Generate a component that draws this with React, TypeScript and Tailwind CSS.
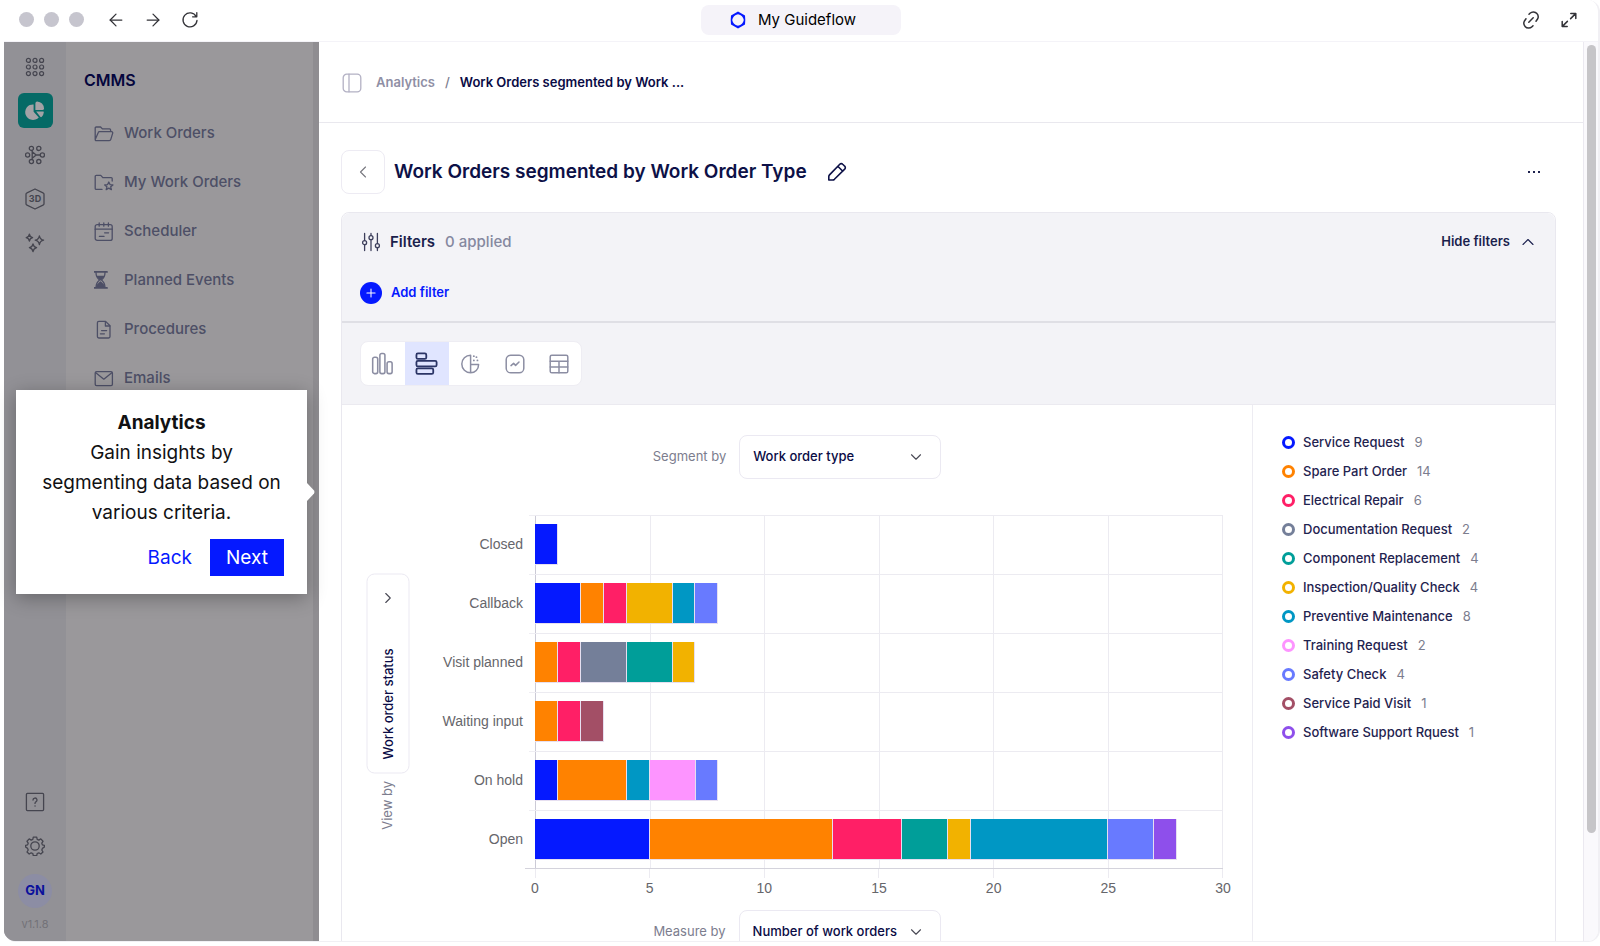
import type { ReactNode } from 'react';
import { ArrowLeft, ArrowRight, ChevronDown, ChevronLeft, ChevronUp, Plus } from 'lucide-react';

const BLUE = '#0519ff';
const ORANGE = '#ff8200';
const PINK = '#ff1f66';
const SLATE = '#747f99';
const GREEN = '#009e99';
const YELLOW = '#f2b200';
const CYAN = '#0097c4';
const LILAC = '#fd94ff';
const INDIGO = '#687aff';
const MAROON = '#a34f66';
const PURPLE = '#8e4feb';

const legend = [
  { label: 'Service Request', count: 9, color: BLUE },
  { label: 'Spare Part Order', count: 14, color: ORANGE },
  { label: 'Electrical Repair', count: 6, color: PINK },
  { label: 'Documentation Request', count: 2, color: SLATE },
  { label: 'Component Replacement', count: 4, color: GREEN },
  { label: 'Inspection/Quality Check', count: 4, color: YELLOW },
  { label: 'Preventive Maintenance', count: 8, color: CYAN },
  { label: 'Training Request', count: 2, color: LILAC },
  { label: 'Safety Check', count: 4, color: INDIGO },
  { label: 'Service Paid Visit', count: 1, color: MAROON },
  { label: 'Software Support Rquest', count: 1, color: PURPLE },
];

const MAX = 30;
const ticks = [0, 5, 10, 15, 20, 25, 30];

const rows: { label: string; parts: [string, number][] }[] = [
  { label: 'Closed', parts: [[BLUE, 1]] },
  { label: 'Callback', parts: [[BLUE, 2], [ORANGE, 1], [PINK, 1], [YELLOW, 2], [CYAN, 1], [INDIGO, 1]] },
  { label: 'Visit planned', parts: [[ORANGE, 1], [PINK, 1], [SLATE, 2], [GREEN, 2], [YELLOW, 1]] },
  { label: 'Waiting input', parts: [[ORANGE, 1], [PINK, 1], [MAROON, 1]] },
  { label: 'On hold', parts: [[BLUE, 1], [ORANGE, 3], [CYAN, 1], [LILAC, 2], [INDIGO, 1]] },
  {
    label: 'Open',
    parts: [[BLUE, 5], [ORANGE, 8], [PINK, 3], [GREEN, 2], [YELLOW, 1], [CYAN, 6], [INDIGO, 2], [PURPLE, 1]],
  },
];

function Icon({ size = 20, stroke = 1.3, children }: { size?: number; stroke?: number; children: ReactNode }) {
  return (
    <svg
      width={size}
      height={size}
      viewBox="0 0 20 20"
      fill="none"
      stroke="currentColor"
      strokeWidth={stroke}
      strokeLinecap="round"
      strokeLinejoin="round"
      aria-hidden="true"
    >
      {children}
    </svg>
  );
}

const navItems: { label: string; icon: ReactNode }[] = [
  {
    label: 'Work Orders',
    icon: (
      <Icon>
        <path d="M1.200 15.400V4a1 1 0 0 1 1-1h4.400l1.800 1.900h7.200a1 1 0 0 1 1 1v1.700M1.200 15.400l3.200-7.100a1 1 0 0 1 1-.7h12.200a1.200 1.200 0 0 1 1.100 1.500l-1.900 6.300a1.600 1.600 0 0 1-1.600 1.200H2.200a1 1 0 0 1-1-1.200z" />
      </Icon>
    ),
  },
  {
    label: 'My Work Orders',
    icon: (
      <Icon>
        <path d="M8 16.400H2.200a1 1 0 0 1-1-1V3.400a1 1 0 0 1 1-1h4.600l2 2.200h8.400a1 1 0 0 1 1 1V8" />
        <path d="M14.800 9l1.200 2.600 2.900.3-2.200 1.900.7 2.800-2.600-1.500-2.600 1.500.7-2.800-2.200-1.900 2.900-.3z" />
      </Icon>
    ),
  },
  {
    label: 'Scheduler',
    icon: (
      <Icon>
        <rect x="1.200" y="2.600" width="17" height="15.800" rx="2" />
        <path d="M1.200 7.200h17M5.200 1v3.200M9.800 1v3.200M14.400 1v3.200M10.600 10.800h4M5.400 14.400h4.600" />
      </Icon>
    ),
  },
  {
    label: 'Planned Events',
    icon: (
      <Icon>
        <path d="M0 .9h13M0 16.900h13" strokeWidth="1.800" />
        <path d="M2 1.400c0 4 1.200 5.600 3.500 7.500C3.200 10.800 2 12.600 2 16.600M11 1.400c0 4-1.200 5.600-3.500 7.500 2.300 1.900 3.500 3.700 3.500 7.700" />
        <path d="M3.400 5.400h6.200L6.500 8.800zM2.600 16.200c.4-2.800 1.700-3.300 3.900-5.200 2.200 1.900 3.500 2.400 3.900 5.200z" fill="currentColor" />
      </Icon>
    ),
  },
  {
    label: 'Procedures',
    icon: (
      <Icon>
        <path d="M4.800 1.400h6.800L16 5.800v10.800a1.400 1.400 0 0 1-1.400 1.400H4.800a1.400 1.400 0 0 1-1.400-1.400V2.800a1.400 1.400 0 0 1 1.400-1.400z" />
        <path d="M11.400 1.600V6h4.400M7.600 10.600h5M6.400 13.800h4" />
      </Icon>
    ),
  },
  {
    label: 'Emails',
    icon: (
      <Icon>
        <rect x="1.200" y="2.600" width="17.200" height="14" rx="1.400" />
        <path d="M1.800 3.800l8 6.400 8-6.400" />
      </Icon>
    ),
  },
];

const railItems: { label: string; icon: ReactNode }[] = [
  {
    label: 'Workflows',
    icon: (
      <Icon stroke={1.3}>
        <circle cx="6.400" cy="3.400" r="2.100" />
        <circle cx="13.800" cy="3.400" r="2.100" />
        <circle cx="2.600" cy="10" r="2.100" />
        <circle cx="17.400" cy="10" r="2.100" />
        <circle cx="6.400" cy="16.600" r="2.100" />
        <circle cx="13.800" cy="16.600" r="2.100" />
        <path d="M7.200 5.600v8.800M7.200 6.800l4 3.200-4 3.200M11.200 10h4" />
      </Icon>
    ),
  },
  {
    label: '3D models',
    icon: (
      <span className="relative flex size-5 items-center justify-center">
        <svg className="absolute" width="22" height="22" viewBox="0 0 22 22" fill="none" stroke="currentColor" strokeWidth="1.300" strokeLinejoin="round">
          <path d="M11 1l8 3.800a1.600 1.600 0 0 1 1 1.500v9.400a1.600 1.600 0 0 1-1 1.500L11 21l-8-3.800a1.600 1.600 0 0 1-1-1.500V6.300a1.600 1.600 0 0 1 1-1.500z" />
        </svg>
        <span className="text-[9px] font-bold">3D</span>
      </span>
    ),
  },
  {
    label: 'Assistant',
    icon: (
      <Icon>
        <path d="M4.400 1.200c.4 2.400 1 3 3.200 3.500-2.200.5-2.800 1.100-3.200 3.500-.4-2.400-1-3-3.200-3.500 2.200-.5 2.800-1.100 3.200-3.500zM14.400 2.800c.5 3 1.300 3.800 4.200 4.400-2.900.6-3.700 1.400-4.200 4.400-.5-3-1.300-3.800-4.200-4.400 2.900-.6 3.700-1.400 4.200-4.400zM8 10.800c.5 2.600 1.200 3.300 3.600 3.900-2.400.6-3.100 1.300-3.600 3.900-.5-2.600-1.200-3.300-3.600-3.900 2.400-.6 3.100-1.300 3.600-3.900z" />
      </Icon>
    ),
  },
];

const chartTypes: { label: string; icon: ReactNode }[] = [
  {
    label: 'Columns',
    icon: (
      <Icon size={24}>
        <rect x="1.400" y="4.400" width="4.200" height="13.600" rx="1.500" />
        <rect x="7.400" y="1.200" width="4.200" height="16.800" rx="1.500" />
        <rect x="13.400" y="8.200" width="4.200" height="9.800" rx="1.500" />
      </Icon>
    ),
  },
  {
    label: 'Bars',
    icon: (
      <Icon size={24} stroke={1.5}>
        <rect x="1.200" y="1.200" width="8.200" height="4.600" rx="1.200" />
        <rect x="1.200" y="7.400" width="16.800" height="4.600" rx="1.200" />
        <rect x="1.200" y="13.600" width="14" height="4.600" rx="1.200" />
      </Icon>
    ),
  },
  {
    label: 'Pie',
    icon: (
      <Icon stroke={1.5}>
        <path d="M9.600 1.200a8.800 8.800 0 0 0 0 17.600c4.400 0 8-3.400 8-8.400H9.600zM9.600 10.200v8.600" />
        <path d="M12.800 2.200h.1M12.800 6.400h.1M16.400 6.400h.1M15.400 3.200h.1" strokeWidth="1.800" />
      </Icon>
    ),
  },
  {
    label: 'Trend',
    icon: (
      <Icon stroke={1.5}>
        <rect x="1.200" y="1.200" width="17.600" height="17.600" rx="4.600" />
        <path d="M6 11.600l2.600-2.200 2 2L14 8" />
      </Icon>
    ),
  },
  {
    label: 'Table',
    icon: (
      <Icon stroke={1.5}>
        <rect x="1.200" y="1.200" width="17.600" height="17.600" rx="1.600" />
        <path d="M1.200 7.200h17.600M1.200 13h17.600M10 7.200v11.600" />
      </Icon>
    ),
  },
];

function TitleBar() {
  return (
    <header className="grid h-[42px] shrink-0 grid-cols-[1fr_auto_1fr] items-center border-b border-[#f4f3f8] bg-white text-[#333338]">
      <div className="flex items-center pb-[2px] pl-[15px]">
        <div className="flex gap-[10px]">
          <span className="size-[15px] rounded-full bg-[#c6c5ce]" />
          <span className="size-[15px] rounded-full bg-[#c6c5ce]" />
          <span className="size-[15px] rounded-full bg-[#c6c5ce]" />
        </div>
        <div className="ml-[22px] flex gap-[17px]">
          <button type="button" aria-label="Back in history"><ArrowLeft size={20} strokeWidth={1.5} /></button>
          <button type="button" aria-label="Forward in history"><ArrowRight size={20} strokeWidth={1.5} /></button>
          <button type="button" aria-label="Reload">
            <Icon>
              <path d="M16.200 6.600A7 7 0 1 0 17 10.400M16.800 2.600v4.200h-4.200" />
            </Icon>
          </button>
        </div>
      </div>
      <div className="mb-px flex h-[30px] w-[200px] items-center justify-center gap-3 rounded-lg bg-[#f5f3f9] pr-4 text-[15px] text-black">
        <svg width="16" height="18" viewBox="0 0 16 18" aria-hidden="true">
          <path fill="#0519ff" fillRule="evenodd" d="M8 .4L15 4.400Q15.600 9 15 13.600L8 17.600 1 13.600Q.4 9 1 4.400zM8 3.200Q3 4.400 2.200 9 3 13.600 8 14.800 13 13.600 13.800 9 13 4.400 8 3.200z" />
        </svg>
        My Guideflow
      </div>
      <div className="flex justify-end gap-[18px] pr-[19px] pb-[2px]">
        <button type="button" aria-label="Copy link">
          <Icon stroke={1.5}>
            <path d="M8 4.300l1-1a4.700 4.700 0 0 1 6.900.3 4.700 4.700 0 0 1 .8 5.200l-1.700 2.400M12 15.700l-1 1a4.700 4.700 0 0 1-6.900-.3 4.700 4.700 0 0 1-.8-5.200L5 8.800M7.800 12.200l4.400-4.400" />
          </Icon>
        </button>
        <button type="button" aria-label="Full screen">
          <Icon stroke={1.5}>
            <path d="M11.800 3.400h5v5M16.600 3.600l-5 5M8.200 16.600h-5v-5M3.400 16.400l5-5" />
          </Icon>
        </button>
      </div>
    </header>
  );
}

function Sidebar() {
  return (
    <aside className="flex w-[315px] shrink-0 border-r-[6px] border-[#8f8d91] bg-[#9a989b]">
      <div className="flex w-[62px] shrink-0 flex-col items-center justify-between bg-[#929196] pt-[15px] pb-[9px] text-[#45454f]">
        <div className="flex flex-col items-center">
          <button type="button" aria-label="Apps" className="mb-4">
            <Icon stroke={1.2}>
              {[3.4, 10, 16.6].map((y) =>
                [3.4, 10, 16.6].map((x) => <circle key={`${x}-${y}`} cx={x} cy={y} r="2" />)
              )}
            </Icon>
          </button>
          <button type="button" aria-label="Analytics" className="mb-[17px] flex size-[35px] items-center justify-center rounded-md bg-[#056a66] text-[#a3a2a6]">
            <svg width="20" height="20" viewBox="0 0 20 20" fill="currentColor" aria-hidden="true">
              <path d="M8.600 3.400V10.800l5.200 5.600A7.800 7.800 0 1 1 8.600 3.400z" />
              <path d="M10.400 2.400Q10.400.6 12.200.6A7.600 7.600 0 0 1 19 7.400Q19 9 17.400 9h-7z" />
              <path d="M11.200 10.600H18.200q.8 0 .6 1a7 7 0 0 1-2 4.200q-.8.700-1.500 0z" />
            </svg>
          </button>
          <div className="flex flex-col gap-6">
            {railItems.map((item) => (
              <button key={item.label} type="button" aria-label={item.label}>{item.icon}</button>
            ))}
          </div>
        </div>
        <div className="flex flex-col items-center">
          <button type="button" aria-label="Help" className="mb-6">
            <Icon>
              <rect x="1.400" y="1.400" width="17.200" height="17.200" rx="1" />
              <path d="M8 8a2 2 0 1 1 2.900 1.800c-.7.400-.9.800-.9 1.600M10 14h.1" />
            </Icon>
          </button>
          <button type="button" aria-label="Settings" className="mb-[18px]">
            <Icon>
              <circle cx="10" cy="10" r="4.200" />
              <path d="M8.300 1.200h3.400l.5 2.200 1.600.7 2-1.200 2.200 2.400-1.200 1.900.6 1.700 2 .5v1.600l-2 1.400-.6 1.600 1.200 2-2.200 2-2-1.200-1.600.7-.5 2.200H8.300l-.5-2.200-1.600-.7-2 1.200-2.200-2 1.200-2-.6-1.600-2-1.400V9.400l2-.5.600-1.700-1.200-1.900 2.200-2.400 2 1.200 1.600-.7z" />
            </Icon>
          </button>
          <span className="flex size-[34px] items-center justify-center rounded-full bg-[#8c8da4] text-[13px] font-bold text-[#0a109c]">GN</span>
          <span className="mt-2 text-[11px] leading-4 text-[#737278]">v1.1.8</span>
        </div>
      </div>
      <nav className="pt-[26px] pl-[18px]">
        <h2 className="text-[16px] leading-6 font-semibold text-[#05063d]">CMMS</h2>
        <ul className="mt-[17px] pl-[10px] text-[15px] font-medium text-[#4d4f66]">
          {navItems.map((item) => (
            <li key={item.label}>
              <a href="#" className="flex h-[49px] items-center gap-[10px]">
                {item.icon}
                {item.label}
              </a>
            </li>
          ))}
        </ul>
      </nav>
    </aside>
  );
}

function SelectField({ id, label, value }: { id: string; label: string; value: string }) {
  return (
    <div className="flex items-center justify-center gap-[13px] text-[13px]">
      <label htmlFor={id} className="text-[#7c7d8e]">{label}</label>
      <div className="relative">
        <select id={id} className="h-11 w-[202px] appearance-none rounded-lg border border-[#ebe9f2] bg-white px-[13px] font-medium text-[#0a0b45]">
          <option>{value}</option>
        </select>
        <ChevronDown size={18} strokeWidth={1.5} className="pointer-events-none absolute top-[13px] right-4 text-[#4a4a55]" />
      </div>
    </div>
  );
}

function BarChart() {
  return (
    <div className="min-w-0 flex-1 font-['Liberation_Sans',sans-serif] text-[14px] text-[#66666b]">
      {rows.map((row, i) => (
        <div key={row.label} className="flex h-[59px]">
          <div className="flex w-[120px] shrink-0 items-center justify-end pr-[6px]">{row.label}</div>
          <div className="w-[6px] shrink-0 border-t border-[#efeef3]" />
          <div className="relative flex flex-1 items-center">
            <div className="absolute inset-0 grid grid-cols-6 border-t border-r border-[#ecebf1]">
              {ticks.slice(0, 6).map((t) => (
                <div key={t} className="border-l border-[#ecebf1] first:border-[#cbcad6]" />
              ))}
            </div>
            {row.parts.map(([color, n], j) => (
              <div
                key={j}
                className="relative h-[41px] border-r border-b border-[#e6dff0]"
                style={{ width: `${(n / MAX) * 100}%`, backgroundColor: color }}
              />
            ))}
            {i === rows.length - 1 && <div className="absolute right-0 bottom-0 -left-[10px] border-b border-[#d4d3dc]" />}
          </div>
        </div>
      ))}
      <div className="ml-[126px] flex h-[41px] justify-between">
        {ticks.map((t) => (
          <div key={t} className="flex w-0 flex-col items-center">
            <span className="h-[9px] border-l border-[#ecebf1]" />
            <span className="leading-5">{t}</span>
          </div>
        ))}
      </div>
    </div>
  );
}

function Report() {
  return (
    <section className="mt-[18px] rounded-t-lg border border-[#e9e8ef]">
      <div className="rounded-t-lg bg-[#f3f3f7]">
        <div className="flex h-[58px] items-center pr-[17px] pl-[19px]">
          <span className="text-[#3d3f5c]">
            <Icon>
              <path d="M3.600 1.400v7.200M3.600 12.800v5.800M10 1.400v2.200M10 7.800v10.800M16.400 1.400v10.200M16.400 15.800v2.800" />
              <circle cx="3.600" cy="10.700" r="2" />
              <circle cx="10" cy="5.700" r="2" />
              <circle cx="16.400" cy="13.700" r="2" />
            </Icon>
          </span>
          <h2 className="ml-[9px] text-[15px] font-semibold text-[#1a1f4d]">Filters</h2>
          <span className="ml-[10px] text-[15px] font-medium text-[#8588a0]">0 applied</span>
          <button type="button" className="ml-auto flex items-center gap-2 text-[13px] font-semibold text-[#1a1f4d]">
            Hide filters
            <ChevronUp size={20} strokeWidth={1.3} />
          </button>
        </div>
        <button type="button" className="flex h-11 items-center gap-[9px] pl-[18px] text-[13px] font-semibold text-[#0519ff]">
          <span className="flex size-[22px] items-center justify-center rounded-full bg-[#0519ff] text-white">
            <Plus size={14} strokeWidth={1.8} />
          </span>
          Add filter
        </button>
        <div className="h-[8px] border-b-2 border-[#dfdfe5]" />
        <div className="flex border-b border-[#ebeaf0] py-[18px] pl-[18px]">
          <div className="flex h-[45px] overflow-hidden rounded-lg border border-[#eeedf3] bg-white">
            {chartTypes.map((type) => (
              <button
                key={type.label}
                type="button"
                aria-label={type.label}
                aria-pressed={type.label === 'Bars'}
                className="flex w-11 items-center justify-center text-[#8c8ea3] aria-pressed:bg-[#e0e5ff] aria-pressed:text-[#2b3566]"
              >
                {type.icon}
              </button>
            ))}
          </div>
        </div>
      </div>

      <div className="grid grid-cols-[1fr_303px]">
        <div className="pt-[30px]">
          <SelectField id="segment-by" label="Segment by" value="Work order type" />
          <div className="mt-9 flex pr-[29px] pl-6">
            {/* Axis picker, read from bottom to top */}
            <div className="mt-[58px] flex flex-col items-center gap-2 self-start text-[13px]">
              <div className="relative flex h-[200px] w-[43px] items-center justify-center">
                <select
                  id="view-by"
                  className="h-[43px] w-[200px] shrink-0 -rotate-90 appearance-none rounded-lg border border-[#ebe9f2] bg-white px-[13px] font-medium text-[#0a0b45]"
                >
                  <option>Work order status</option>
                </select>
                <ChevronDown size={18} strokeWidth={1.5} className="pointer-events-none absolute top-4 left-[13px] -rotate-90 text-[#4a4a55]" />
              </div>
              <label htmlFor="view-by" className="rotate-180 text-[#7c7d8e] [writing-mode:vertical-rl]">View by</label>
            </div>
            <BarChart />
          </div>
          <SelectField id="measure-by" label="Measure by" value="Number of work orders" />
        </div>
        <ul className="border-l border-[#edecf2] pt-[23px] pl-[29px] text-[13px] font-medium text-[#1f234f]">
          {legend.map((item) => (
            <li key={item.label} className="flex h-[29px] items-center">
              <span className="size-[13px] rounded-full border-[3px]" style={{ borderColor: item.color }} />
              <span className="ml-2">{item.label}</span>
              <span className="ml-[10px] font-normal text-[#7c7d8e]">{item.count}</span>
            </li>
          ))}
        </ul>
      </div>
    </section>
  );
}

function Main() {
  return (
    <main className="min-w-0 flex-1 overflow-hidden">
      <div className="flex h-[81px] items-center border-b border-[#e9e8ee] pt-px pl-[23px] text-[13px]">
        <button type="button" aria-label="Toggle sidebar" className="text-[#b3b1c4]">
          <Icon>
            <rect x="1.200" y="1.200" width="17.600" height="17.600" rx="3.600" />
            <path d="M7 1.200v17.600" />
          </Icon>
        </button>
        <a href="#" className="ml-[14px] font-semibold text-[#8f8fa5]">Analytics</a>
        <span className="mx-[10px] font-medium text-[#7c7d8e]">/</span>
        <span className="font-semibold text-[#0a0b45]">Work Orders segmented by Work ...</span>
      </div>
      <div className="pt-[27px] pr-[27px] pl-[22px]">
        <div className="flex items-center">
          <button type="button" aria-label="Go back" className="flex size-11 items-center justify-center rounded-lg border border-[#edebf3] text-[#77777f]">
            <ChevronLeft size={20} strokeWidth={1.3} />
          </button>
          <h1 className="ml-[9px] text-[19px] font-semibold text-[#0d1147]">Work Orders segmented by Work Order Type</h1>
          <button type="button" aria-label="Rename" className="ml-5 text-[#0d1147]">
            <Icon stroke={1.6}>
              <path d="M1.800 18v-3.400a2.600 2.600 0 0 1 .7-1.700L12.800 2.200a2 2 0 0 1 2.900 0l2 2a2 2 0 0 1 0 2.900L7.400 17.300a2.600 2.600 0 0 1-1.700.7zM10.800 4.200l5 5" />
            </Icon>
          </button>
          <button type="button" aria-label="More" className="ml-auto flex gap-[3px] px-4 py-3">
            <span className="size-[2px] bg-[#1f234f]" />
            <span className="size-[2px] bg-[#1f234f]" />
            <span className="size-[2px] bg-[#1f234f]" />
          </button>
        </div>
        <Report />
      </div>
    </main>
  );
}

function TourStep() {
  return (
    <div role="dialog" aria-label="Analytics" className="absolute top-[390px] left-4 w-[291px] bg-white px-[23px] pt-[18px] pb-[18px] text-center text-[19px] leading-[30px] text-[#111113] shadow-[0_4px_18px_rgba(0,0,0,0.3)]">
      <h3 className="font-bold">Analytics</h3>
      <p>Gain insights by segmenting data based on various criteria.</p>
      <div className="mt-[11px] flex items-center justify-end gap-[18px]">
        <button type="button" className="text-[#0519ff]">Back</button>
        <button type="button" className="h-[37px] w-[74px] bg-[#0519ff] text-white">Next</button>
      </div>
      <svg className="absolute top-[93px] left-full" width="8" height="18" viewBox="0 0 8 18" aria-hidden="true">
        <path d="M0 0L7 7.500Q8 9 7 10.500L0 18z" fill="#fff" />
      </svg>
    </div>
  );
}

export default function App() {
  return (
    <div className="h-screen overflow-hidden bg-white pb-1 pl-1 font-['Inter',sans-serif]">
      <div className="flex h-full flex-col overflow-hidden rounded-xl border-r-2 border-b border-[#f1f0f4]">
        <TitleBar />
        <div className="flex min-h-0 flex-1">
          <Sidebar />
          <Main />
          <div className="w-[15px] shrink-0 border-l border-[#ebe9f0] bg-[#faf9fc] pt-[3px] pl-[3px]">
            <div className="h-[88%] w-[9px] rounded-full bg-[#c6c5c8]" />
          </div>
        </div>
      </div>
      <TourStep />
    </div>
  );
}
